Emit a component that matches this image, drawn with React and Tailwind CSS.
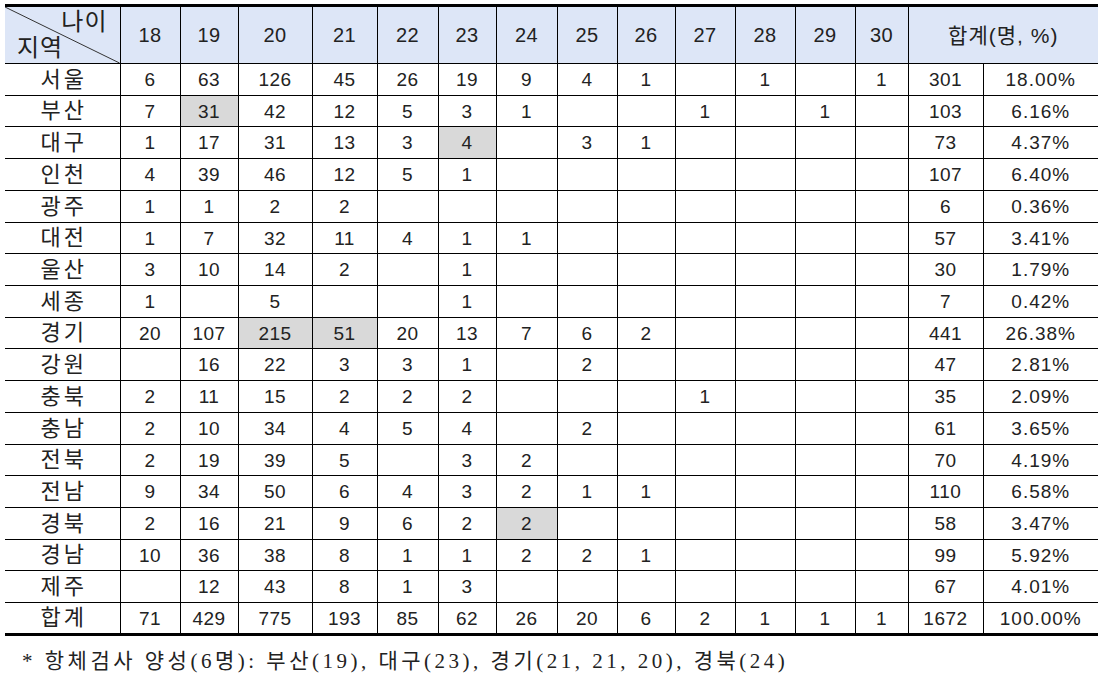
const ages = [18, 19, 20, 21, 22, 23, 24, 25, 26, 27, 28, 29, 30];

// widths of each column, in px
const colWidths = [115, 60, 58, 74, 65, 61, 58, 61, 60, 58, 60, 60, 60, 53, 75, 115];

// [region, values for 18..30, total, percent, shaded age indexes]
const rows = [
  ["서울", [6, 63, 126, 45, 26, 19, 9, 4, 1, "", 1, "", 1], 301, "18.00%", []],
  ["부산", [7, 31, 42, 12, 5, 3, 1, "", "", 1, "", 1, ""], 103, "6.16%", [1]],
  ["대구", [1, 17, 31, 13, 3, 4, "", 3, 1, "", "", "", ""], 73, "4.37%", [5]],
  ["인천", [4, 39, 46, 12, 5, 1, "", "", "", "", "", "", ""], 107, "6.40%", []],
  ["광주", [1, 1, 2, 2, "", "", "", "", "", "", "", "", ""], 6, "0.36%", []],
  ["대전", [1, 7, 32, 11, 4, 1, 1, "", "", "", "", "", ""], 57, "3.41%", []],
  ["울산", [3, 10, 14, 2, "", 1, "", "", "", "", "", "", ""], 30, "1.79%", []],
  ["세종", [1, "", 5, "", "", 1, "", "", "", "", "", "", ""], 7, "0.42%", []],
  ["경기", [20, 107, 215, 51, 20, 13, 7, 6, 2, "", "", "", ""], 441, "26.38%", [2, 3]],
  ["강원", ["", 16, 22, 3, 3, 1, "", 2, "", "", "", "", ""], 47, "2.81%", []],
  ["충북", [2, 11, 15, 2, 2, 2, "", "", "", 1, "", "", ""], 35, "2.09%", []],
  ["충남", [2, 10, 34, 4, 5, 4, "", 2, "", "", "", "", ""], 61, "3.65%", []],
  ["전북", [2, 19, 39, 5, "", 3, 2, "", "", "", "", "", ""], 70, "4.19%", []],
  ["전남", [9, 34, 50, 6, 4, 3, 2, 1, 1, "", "", "", ""], 110, "6.58%", []],
  ["경북", [2, 16, 21, 9, 6, 2, 2, "", "", "", "", "", ""], 58, "3.47%", [6]],
  ["경남", [10, 36, 38, 8, 1, 1, 2, 2, 1, "", "", "", ""], 99, "5.92%", []],
  ["제주", ["", 12, 43, 8, 1, 3, "", "", "", "", "", "", ""], 67, "4.01%", []],
  ["합계", [71, 429, 775, 193, 85, 62, 26, 20, 6, 2, 1, 1, 1], 1672, "100.00%", []],
];

// rows are ~31.7px tall, so alternate 32/31 to land on the same lines
const rowHeights = [32, 31, 32, 32, 32, 31, 32, 32, 31, 32, 32, 32, 31, 32, 32, 31, 32, 32];

export default function App() {
  return (
    <div
      className="w-[1104px] h-[684px] bg-white text-[#222] overflow-hidden"
      style={{ fontFamily: '"Liberation Sans", "Noto Sans CJK KR", sans-serif' }}
    >
      <div className="pl-[5px] pt-[4px]">
        <table className="table-fixed border-collapse w-[1093px] text-[19px] leading-none tracking-[0.5px]">
          <colgroup>
            {colWidths.map((w, i) => (
              <col key={i} style={{ width: w }} />
            ))}
          </colgroup>
          <thead>
            <tr className="h-[58px] bg-[#dde6f7] border-t-[3px] border-black">
              <th className="relative p-0 font-normal border-r border-b border-black">
                <svg className="absolute inset-0 w-full h-full" preserveAspectRatio="none" viewBox="0 0 100 100">
                  <line x1="0" y1="0" x2="100" y2="100" stroke="#333" strokeWidth="1" vectorEffect="non-scaling-stroke" />
                </svg>
                <span className="absolute right-[12px] top-[3px] text-[24px] tracking-[1px]">나이</span>
                <span className="absolute left-[12px] bottom-[3px] text-[24px] tracking-[1px]">지역</span>
              </th>
              {ages.map((a) => (
                <th key={a} className="p-0 font-normal text-[20px] border border-black border-t-0">
                  {a}
                </th>
              ))}
              <th colSpan={2} className="p-0 font-normal text-[21px] tracking-[1px] border-b border-l border-black">
                합계(명, %)
              </th>
            </tr>
          </thead>
          <tbody>
            {rows.map(([region, vals, total, pct, shaded], ri) => (
              <tr
                key={region}
                className={`${rowHeights[ri] === 32 ? "h-[32px]" : "h-[31px]"} ${
                  ri === rows.length - 1 ? "border-b-[3px] border-black" : ""
                }`}
              >
                <td className="p-0 pl-[3px] text-center border-r border-b border-black text-[22px] tracking-[3px]">
                  {region}
                </td>
                {vals.map((v, i) => (
                  <td
                    key={i}
                    className={`p-0 text-center border border-black ${
                      shaded.includes(i) ? "bg-[#d9d9d9]" : ""
                    }`}
                  >
                    {v}
                  </td>
                ))}
                <td className="p-0 text-center border border-black">{total}</td>
                <td className="p-0 text-center border-l border-b border-black tracking-[1px]">{pct}</td>
              </tr>
            ))}
          </tbody>
        </table>
      </div>
      <p
        className="pl-[22px] pt-[15px] text-[21px] leading-none tracking-[3.5px]"
        style={{ fontFamily: '"Liberation Serif", "Noto Sans CJK KR", serif' }}
      >
        * 항체검사 양성(6명): 부산(19), 대구(23), 경기(21, 21, 20), 경북(24)
      </p>
    </div>
  );
}
